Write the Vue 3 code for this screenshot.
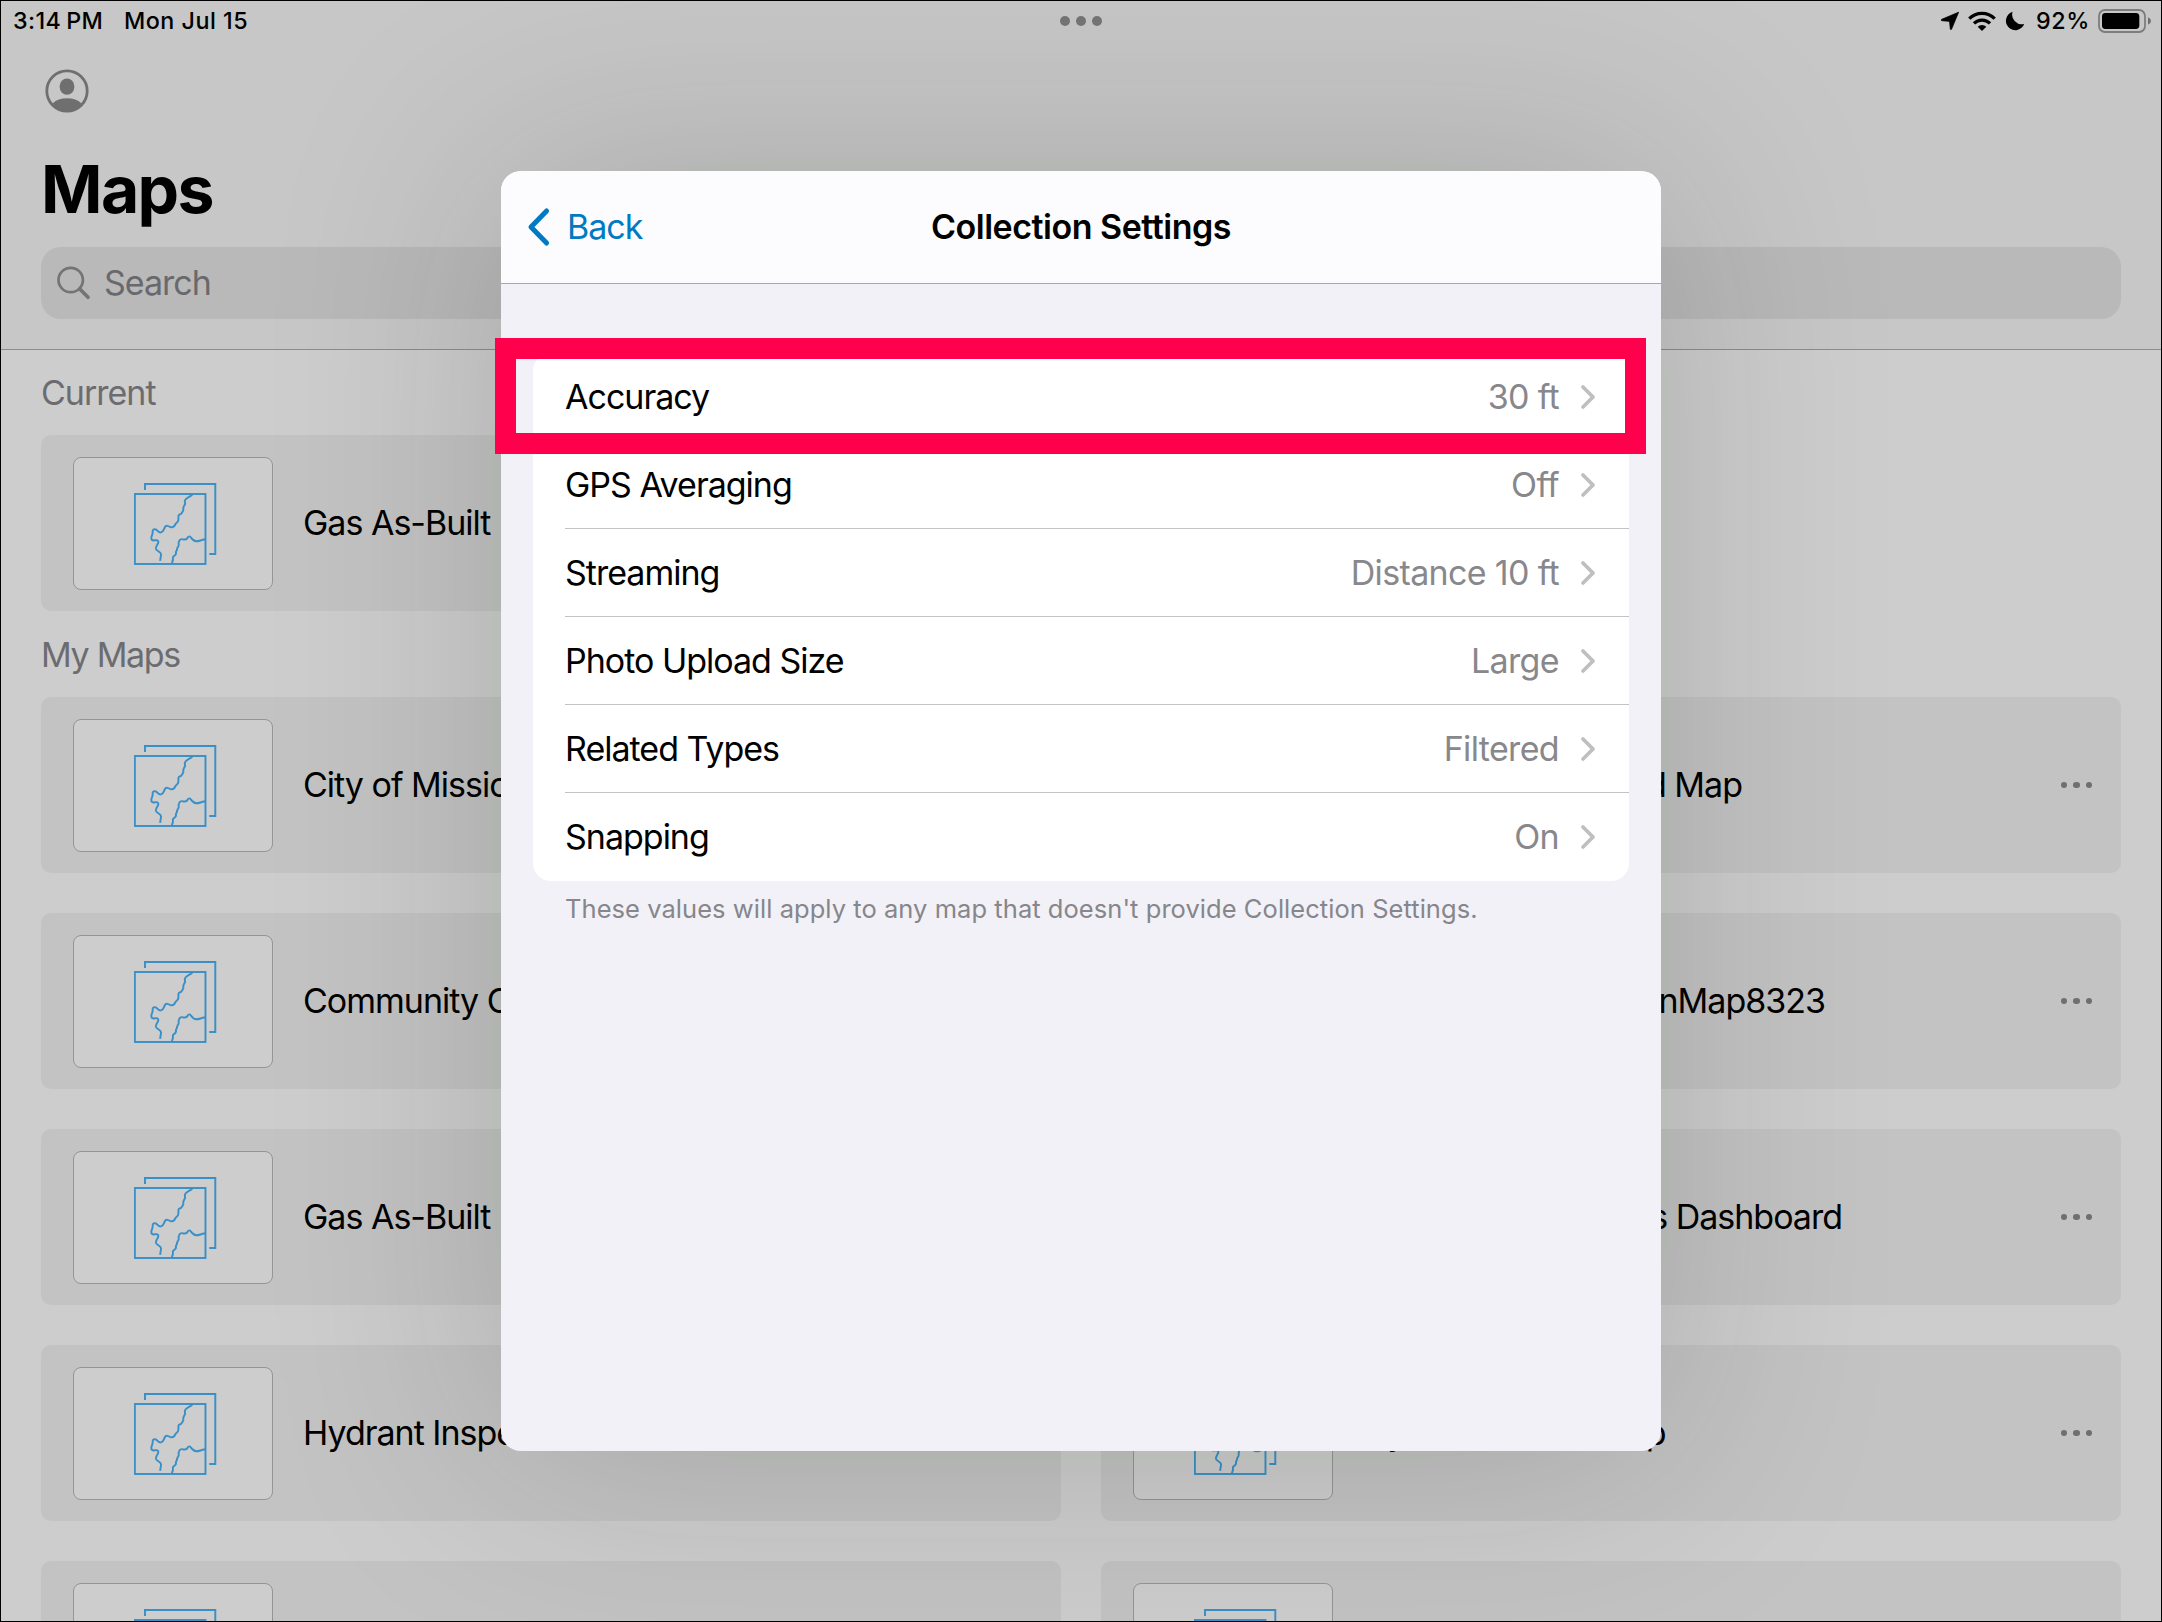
<template>
  <div class="screen">
    <header class="header">
      <div class="status">
        <div class="status-left">
          <span class="time">3:14<i></i>PM</span>
          <span class="date">Mon Jul 15</span>
        </div>
        <div class="status-right">
          <svg class="loc" width="20" height="20" viewBox="0 0 20 20">
            <path d="M18.6 1.2 L11.6 18 Q11 19.4 10.3 18 L9.6 10.7 Q9.5 10.3 9 10.3 L2 9.7 Q0.2 9.1 2 8.2 Z" stroke="#000" stroke-width="0.8" stroke-linejoin="round" />
          </svg>
          <svg class="wifi" width="28" height="21" viewBox="0 0 28 21">
            <g fill="none" stroke="#000" stroke-width="3.3">
              <path d="M1.3 7.6 A18 18 0 0 1 26.7 7.6" />
              <path d="M6 12.4 A11.3 11.3 0 0 1 22 12.4" />
            </g>
            <path d="M14 20 L9.7 15.7 A6.2 6.2 0 0 1 18.3 15.7 Z" />
          </svg>
          <svg class="moon" width="20" height="20" viewBox="0 0 20 20">
            <path d="M7.6 0.8 A9.4 9.4 0 1 0 19.2 12.9 A9.6 9.6 0 0 1 7.6 0.8 Z" />
          </svg>
          <span class="percent">92%</span>
          <svg class="battery" width="54" height="24" viewBox="0 0 54 24">
            <rect x="1" y="1" width="46" height="22" rx="6" fill="none" stroke="#7d7d7d" stroke-width="1.8" />
            <rect x="4" y="4" width="37.3" height="16" rx="3.4" />
            <path d="M50 8.2 Q53 9.4 53 12 Q53 14.6 50 15.8 Z" fill="#6f6f6f" />
          </svg>
        </div>
        <div class="grabber"><b></b><b></b><b></b></div>
      </div>
      <svg class="account" width="44" height="44" viewBox="0 0 44 44">
        <circle cx="22" cy="22" r="20.2" fill="none" stroke="#6f6f6f" stroke-width="2.8" />
        <ellipse cx="22" cy="17.6" rx="7.4" ry="8.2" fill="#6f6f6f" />
        <path d="M7.6 34.4 Q13 29.3 22 29.3 Q31 29.3 36.4 34.4 Q30.5 42.6 22 42.6 Q13.5 42.6 7.6 34.4 Z" fill="#6f6f6f" />
      </svg>
      <h1>Maps</h1>
      <div class="search">
        <svg width="34" height="34" viewBox="0 0 34 34" fill="none" stroke="#747474" stroke-linecap="round">
          <circle cx="13.7" cy="14" r="12.2" stroke-width="2.7" />
          <path d="M22.8 23 L31 31.2" stroke-width="3.7" />
        </svg>
        <span>Search</span>
      </div>
    </header>

    <main class="content">
      <h2 class="current">Current</h2>
      <div class="grid">
        <div class="card">
          <div class="thumb">
            <svg viewBox="43 70 247 246"><use href="#map-glyph" /></svg>
          </div>
          <span class="name">Gas As-Built</span>
        </div>
      </div>
      <h2 class="mine">My Maps</h2>
      <div class="grid">
        <div v-for="(map, i) in maps" :key="i" class="card">
          <div class="thumb">
            <svg viewBox="43 70 247 246"><use href="#map-glyph" /></svg>
          </div>
          <span class="name" :style="{ width: map.width ? map.width + 'px' : 'auto', textAlign: map.width ? 'right' : 'left' }">{{ map.name }}</span>
          <span class="more"><b></b><b></b><b></b></span>
        </div>
      </div>
    </main>

    <section class="modal">
      <div class="modal-bar">
        <a class="back">
          <svg width="24" height="40" viewBox="0 0 24 40">
            <path d="M19.6 4 L4 20 L19.6 36" fill="none" stroke="#007ac2" stroke-width="5" stroke-linecap="round" stroke-linejoin="round" />
          </svg>
          <span>Back</span>
        </a>
        <h3>Collection Settings</h3>
      </div>
      <div class="group">
        <div v-for="row in settings" :key="row.label" class="row">
          <span class="label">{{ row.label }}</span>
          <span class="value">{{ row.value }}</span>
          <svg width="16" height="26" viewBox="0 0 16 26">
            <path d="M3 3 L13 13 L3 23" fill="none" stroke="#bfbfc1" stroke-width="3.8" stroke-linecap="round" stroke-linejoin="round" />
          </svg>
        </div>
      </div>
      <p class="note">These values will apply to any map that doesn't provide Collection Settings.</p>
    </section>

    <div class="highlight"></div>
    <div class="frame"></div>

    <svg class="defs" width="0" height="0">
      <defs>
        <g id="map-glyph" fill="none" stroke="#3a8fc6" stroke-width="5.8">
          <path d="M76 91 V73 H287 V283 H269" />
          <rect x="45.500" y="103" width="212" height="210" />
          <path d="M218 105 C212 112 200 113 196 122 c-2 6 2 8 0 12 s-6 8 -5 14 c1 8 -4 8 -5 13 c-1 4 -8 1 -9 6 c-2 6 1 12 -2 18 c-4 6 -6 4 -8 9 c-3 9 -13 10 -16 8 c-4 -3 -12 -6 -15 0 c-4 8 -4 14 -12 16 c-8 2 -10 -5 -14 -8 c-5 -3 -12 -1 -11 6 c1 8 -4 12 -4 18 c0 8 4 9 10 8 c6 -1 12 0 11 6 c-1 6 -9 12 -7 20 c2 6 14 8 15 15 c1 6 -3 14 -2 21" />
          <path d="M157 312 c0 -6 2 -8 3 -11 c0 -5 -2 -8 2 -11 c5 -3 8 -5 7 -10 c-1 -5 2 -6 3 -10 c0 -6 0 -6 4 -10 c3 -3 -1 -8 2 -15 c2 -6 5 -8 12 -6 c8 2 12 0 14 -5 c4 -6 8 -4 10 0 c4 6 8 10 16 11 c8 0 14 -4 26 -6" />
        </g>
      </defs>
    </svg>
  </div>
</template>

<script setup>
// width: names in the right column are aligned to their end
const maps = [
  { name: 'City of Mission' },
  { name: 'Shared Map', width: 379 },
  { name: 'Community Center' },
  { name: 'PlanMap8323', width: 462 },
  { name: 'Gas As-Built' },
  { name: 'Operations Dashboard', width: 479 },
  { name: 'Hydrant Inspection' },
  { name: 'Hydrant Crews Map', width: 301 },
  { name: '' },
  { name: '' }
]

const settings = [
  { label: 'Accuracy', value: '30 ft' },
  { label: 'GPS Averaging', value: 'Off' },
  { label: 'Streaming', value: 'Distance 10 ft' },
  { label: 'Photo Upload Size', value: 'Large' },
  { label: 'Related Types', value: 'Filtered' },
  { label: 'Snapping', value: 'On' }
]
</script>

<style>
body {
  margin: 0;
  overflow: hidden;
}
</style>

<style scoped>
.screen {
  position: relative;
  width: 2162px;
  height: 1622px;
  overflow: hidden;
  background: #cdcdcd;
  color: #000;
  font-family: Inter, "Liberation Sans", sans-serif;
  font-size: 34px;
  letter-spacing: -1px;
}

h1, h2, h3, p {
  margin: 0;
}

.header {
  box-sizing: border-box;
  height: 350px;
  border-bottom: 1px solid #8c8c8c;
  background: #c7c7c7;
}

.status {
  position: relative;
  display: flex;
  justify-content: space-between;
  height: 42px;
  padding: 0 10px 0 13px;
  font-size: 23.300px;
  line-height: 42px;
  font-weight: 500;
}

.status-left,
.status-right {
  display: flex;
  align-items: center;
}

.time {
  width: 111px;
  letter-spacing: 0.4px;
}

.time i {
  display: inline-block;
  width: 5px;
}

.date {
  letter-spacing: 0.5px;
}

.loc { margin-right: 8px; }
.wifi { margin-right: 9px; }
.moon { margin-right: 11px; }

.percent {
  width: 62px;
  letter-spacing: 0.6px;
}

.grabber {
  position: absolute;
  left: 1060px;
  top: 16px;
  display: flex;
  gap: 6px;
}

.grabber b {
  width: 10px;
  height: 10px;
  border-radius: 50%;
  background: #757673;
}

.account {
  display: block;
  margin: 27px 0 0 45px;
}

h1 {
  margin: 37px 0 0 41px;
  height: 80px;
  font-size: 66px;
  line-height: 78px;
  font-weight: 700;
  letter-spacing: -1.6px;
}

.search {
  display: flex;
  align-items: center;
  gap: 13px;
  box-sizing: border-box;
  width: 2080px;
  height: 72px;
  margin: 17px 0 0 41px;
  padding: 0 16px;
  border-radius: 20px;
  background: #b9b9b9;
  color: #69696d;
}

.search span {
  margin-bottom: 2px;
}

h2 {
  height: 42px;
  margin-left: 41px;
  color: #6c6c70;
  font-size: 34px;
  line-height: 42px;
  font-weight: 400;
}

.current {
  padding: 22px 0 21px;
}

.mine {
  padding: 23px 0 21px;
  letter-spacing: -1.3px;
}

.grid {
  display: grid;
  grid-template-columns: 1020px 1020px;
  gap: 40px;
  margin-left: 41px;
}

.card {
  display: flex;
  align-items: center;
  box-sizing: border-box;
  height: 176px;
  padding: 0 29px 0 32px;
  border-radius: 10px;
  background: #c3c3c3;
}

.thumb {
  display: flex;
  align-items: center;
  justify-content: center;
  box-sizing: border-box;
  width: 200px;
  height: 133px;
  margin-right: 30px;
  border: 1px solid #959595;
  border-radius: 8px;
  background: #cdcdcd;
}

.thumb svg {
  width: 82.300px;
  height: 82px;
  margin: 2px 0 0 5px;
}

.name {
  margin-bottom: 2px;
  white-space: nowrap;
}

.more {
  display: flex;
  gap: 6px;
  margin-left: auto;
}

.more b {
  width: 6.400px;
  height: 6.400px;
  border-radius: 50%;
  background: #6f6f6f;
}

.modal {
  position: absolute;
  left: 501px;
  top: 171px;
  width: 1160px;
  height: 1280px;
  border-radius: 20px;
  background: #f2f1f7;
  box-shadow: 0 0 225px 10px rgba(0, 24, 0, 0.17);
}

.modal-bar {
  position: relative;
  display: flex;
  align-items: center;
  justify-content: center;
  box-sizing: border-box;
  height: 113px;
  border-bottom: 1px solid #a7a7ab;
  border-radius: 20px 20px 0 0;
  background: #fcfcfe;
}

.back {
  position: absolute;
  left: 26px;
  display: flex;
  align-items: center;
  gap: 16px;
  color: #007ac2;
}

.back span {
  margin-bottom: 2px;
}

h3 {
  margin-bottom: 2px;
  font-size: 34px;
  font-weight: 600;
  letter-spacing: -0.48px;
}

.group {
  margin: 69px 32px 0;
  border-radius: 18px;
  background: #fff;
}

.row {
  display: flex;
  align-items: center;
  box-sizing: border-box;
  height: 88px;
  margin-left: 32px;
  padding-right: 33px;
  border-bottom: 1px solid #c4c4c6;
}

.row:last-child {
  border-bottom-color: transparent;
}

.value {
  margin: 0 21px 0 auto;
  color: #88888c;
  letter-spacing: -0.65px;
}

.note {
  margin: 11px 0 0 64px;
  color: #86868b;
  font-size: 25.500px;
  line-height: 34px;
  letter-spacing: 0.05px;
  white-space: nowrap;
}

.highlight {
  position: absolute;
  left: 495px;
  top: 338px;
  box-sizing: border-box;
  width: 1151px;
  height: 116px;
  border: 21px solid #ff004d;
}

.frame {
  position: absolute;
  inset: 0;
  border: 1px solid #000;
}

.defs {
  position: absolute;
}
</style>
